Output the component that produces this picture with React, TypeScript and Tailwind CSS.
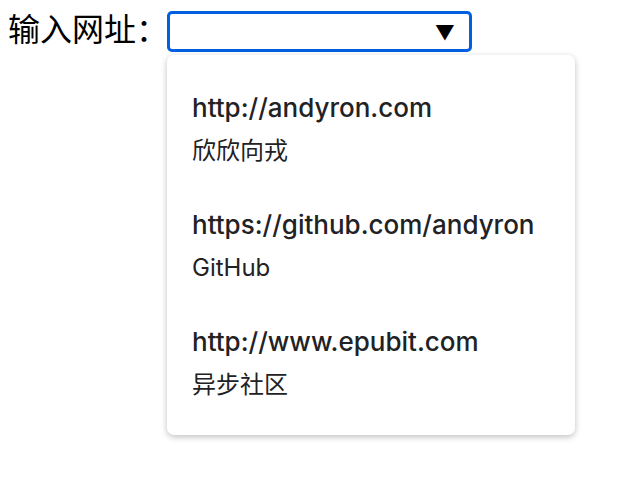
const items = [
  { url: "http://andyron.com", name: "欣欣向戎" },
  { url: "https://github.com/andyron", name: "GitHub" },
  { url: "http://www.epubit.com", name: "异步社区" },
];

export default function App() {
  return (
    <div
      className="relative h-[478px] w-[632px] bg-white"
      style={{ fontFamily: 'Inter, "Noto Sans CJK SC", sans-serif' }}
    >
      <div className="flex items-start pl-2 pt-[11px]">
        {/* Label */}
        <span className="w-[159px] shrink-0 whitespace-nowrap text-[32px] leading-[38px] text-black">输入网址：</span>

        {/* Input + dropdown */}
        <div className="relative">
          <div className="flex h-[41px] w-[305px] items-center justify-end rounded-[5px] border-[3px] border-[#0060df] pr-[14px] pt-[2px]">
            <span className="text-[20px] leading-none text-black">▼</span>
          </div>

          <ul className="absolute left-0 top-[44px] w-[408px] rounded-[7px] bg-white pb-[14px] pt-[15px] shadow-[0_2px_6px_rgba(0,0,0,0.25)]">
            {items.map((item) => (
              <li key={item.url} className="flex h-[117px] flex-col justify-center px-[25px]">
                <div className="text-[26px] font-medium leading-[34px] text-[#222224]">{item.url}</div>
                <div className="mt-[10px] text-[24px] leading-[32px] text-[#222224]">{item.name}</div>
              </li>
            ))}
          </ul>
        </div>
      </div>
    </div>
  );
}
